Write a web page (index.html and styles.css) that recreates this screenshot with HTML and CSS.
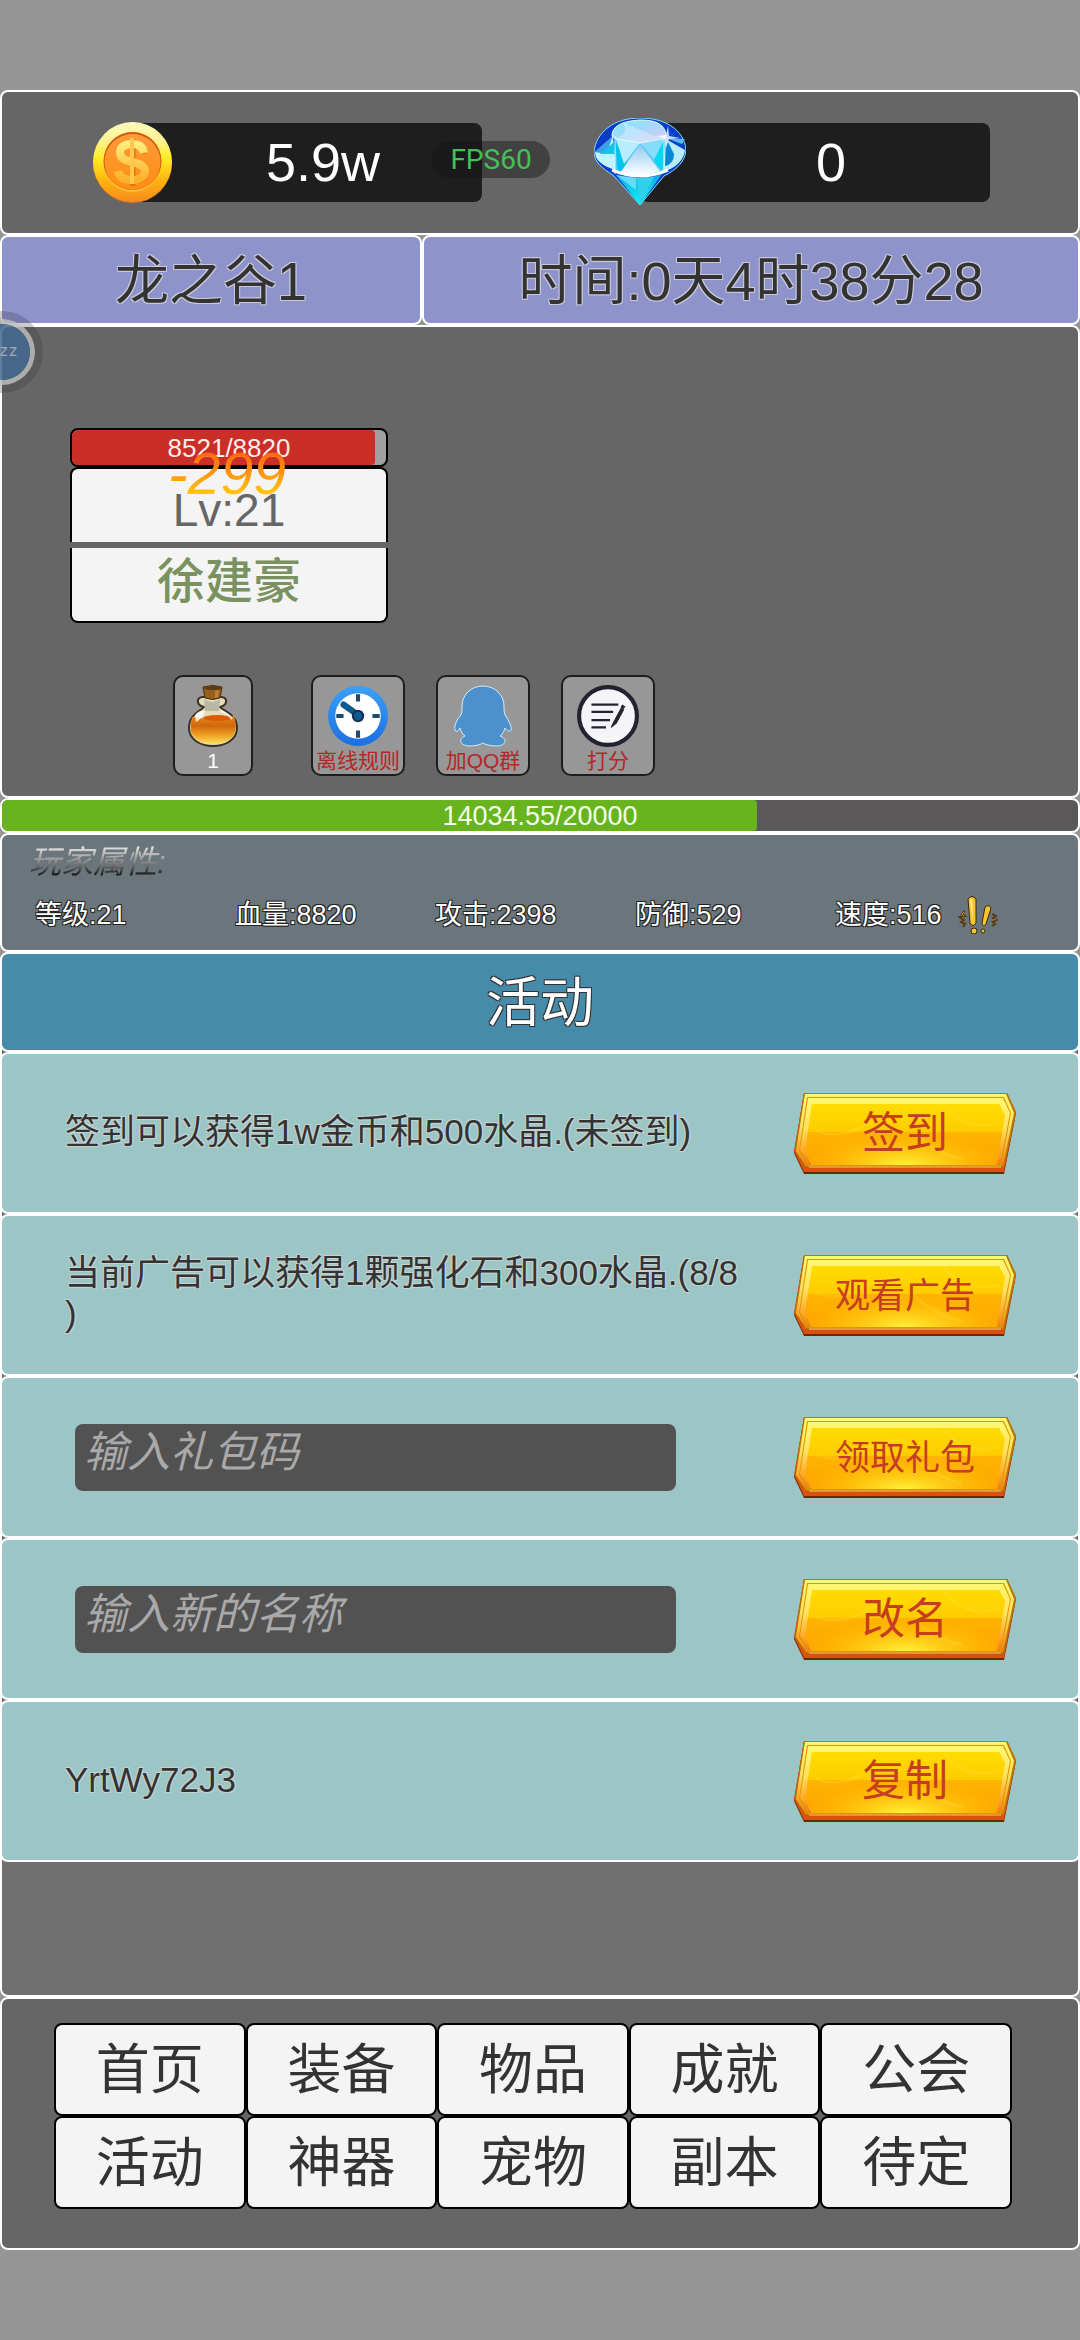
FILE: index.html
```html
<!DOCTYPE html>
<html lang="zh-CN">
<head>
    <meta charset="UTF-8">
    <meta name="viewport" content="width=device-width, initial-scale=1.0">
    <title>活动</title>
    <link rel="stylesheet" href="styles.css">
</head>
<body>
    <!-- shared gold button plate -->
    <svg class="defs" width="0" height="0" aria-hidden="true">
        <defs>
            <linearGradient id="rim" x1="0" y1="0" x2="0" y2="1">
                <stop offset="0" stop-color="#fff873"/>
                <stop offset="0.45" stop-color="#ffe060"/>
                <stop offset="0.8" stop-color="#ffa52a"/>
                <stop offset="1" stop-color="#f07a18"/>
            </linearGradient>
            <linearGradient id="face" x1="0" y1="0" x2="0" y2="1">
                <stop offset="0" stop-color="#ffdc00"/>
                <stop offset="0.45" stop-color="#ffcc00"/>
                <stop offset="0.46" stop-color="#ffb400"/>
                <stop offset="1" stop-color="#ffa400"/>
            </linearGradient>
            <radialGradient id="glow" cx="0.5" cy="1" r="0.5">
                <stop offset="0" stop-color="#fff23a"/>
                <stop offset="1" stop-color="#ffd000" stop-opacity="0"/>
            </radialGradient>
            <symbol id="plate" viewBox="0 0 222 81">
                <path d="M10 0H213L222 20L210 81H10L0 60Z" fill="#6e2800"/>
                <path d="M10 0H213L222 19L210 79H10L0 58Z" fill="#d9500f"/>
                <path d="M10 0H213L222 19L210 74H11L1 58Z" fill="#b87a00"/>
                <path d="M11 1H212L220 20L209 73H12L2 58Z" fill="url(#rim)"/>
                <path d="M13 4H210L217 20L207 73H14L5 58Z" fill="#d99a00"/>
                <path d="M14 5H209L216 20L206 72H15L6 57Z" fill="url(#rim)"/>
                <path d="M18 11H205L211 22L203 72H17L11 57Z" fill="url(#face)"/>
                <path d="M18 11H205L211 22L203 72H17L11 57Z" fill="url(#glow)"/>
                <path d="M22 38Q45 46 68 34Q90 20 112 24M150 12Q172 40 206 30M120 40Q140 60 168 66" fill="none" stroke="#ffe94a" stroke-opacity="0.2" stroke-width="3"/>
                <path d="M15 74H207" stroke="#ffc870" stroke-width="1"/>
            </symbol>
        </defs>
    </svg>

    <main class="game">
        <header class="panel wallet">
            <div class="currency">
                <svg class="coin" viewBox="0 0 79 81" aria-hidden="true">
                    <defs>
                        <linearGradient id="coinRim" x1="0" y1="0" x2="0" y2="1">
                            <stop offset="0" stop-color="#fffbc0"/>
                            <stop offset="0.25" stop-color="#fff08a"/>
                            <stop offset="0.45" stop-color="#ffee20"/>
                            <stop offset="0.75" stop-color="#ffb010"/>
                            <stop offset="1" stop-color="#f88a1c"/>
                        </linearGradient>
                        <linearGradient id="coinFace" x1="0" y1="0" x2="0" y2="1">
                            <stop offset="0" stop-color="#ff9a3c"/>
                            <stop offset="1" stop-color="#ff8f12"/>
                        </linearGradient>
                        <linearGradient id="coinSign" x1="0" y1="0" x2="0" y2="1">
                            <stop offset="0" stop-color="#ffec7a"/>
                            <stop offset="1" stop-color="#ffb02a"/>
                        </linearGradient>
                    </defs>
                    <ellipse cx="39.5" cy="41" rx="39.5" ry="40" fill="#e0761c"/>
                    <ellipse cx="39.5" cy="40" rx="39.5" ry="40" fill="url(#coinRim)"/>
                    <ellipse cx="39.5" cy="40" rx="29" ry="30" fill="#ffbe3a"/>
                    <ellipse cx="39.5" cy="39" rx="29" ry="29" fill="#cf5a10"/>
                    <ellipse cx="39.5" cy="40" rx="28" ry="28" fill="url(#coinFace)"/>
                    <path d="M52 32C51 25 46 22 40 22C32 22 27 26 27 31C27 37 32 39 40 41C48 43 53 45 53 51C53 56 47 60 40 60C32 60 27 56 26 50M40 17V64" fill="none" stroke="#d2600c" stroke-width="5" stroke-opacity="0.6"/>
                    <path d="M51 31C50 25 46 22 39 22C31 22 27 26 27 30C27 36 31 38 39 40C47 42 52 44 52 49C52 55 46 58 39 58C31 58 26 55 25 49" fill="none" stroke="url(#coinSign)" stroke-width="8"/>
                    <path d="M37 16H41V62H37Z" fill="#ffc84a"/>
                </svg>
                <span class="amount">5.9w</span>
            </div>
            <div class="currency">
                <svg class="gem" viewBox="0 0 92 88" aria-hidden="true">
                    <defs>
                        <linearGradient id="gemTop" x1="0" y1="0" x2="1" y2="1">
                            <stop offset="0" stop-color="#7ceaff"/>
                            <stop offset="0.5" stop-color="#a8d8fa"/>
                            <stop offset="1" stop-color="#d9c8f5"/>
                        </linearGradient>
                        <linearGradient id="gemMid" x1="0" y1="0" x2="0" y2="1">
                            <stop offset="0" stop-color="#8cc8f0"/>
                            <stop offset="1" stop-color="#ffffff"/>
                        </linearGradient>
                        <linearGradient id="gemLow" x1="0" y1="0" x2="0" y2="1">
                            <stop offset="0" stop-color="#1aa0e8"/>
                            <stop offset="1" stop-color="#00fff0"/>
                        </linearGradient>
                    </defs>
                    <path d="M0 34C2 14 20 0 46 0C72 0 90 12 92 32C91 44 82 52 70 58L46 87L20 58C8 50 0 44 0 34Z" fill="#0a3cc8" stroke="#7ce0ff" stroke-width="1"/>
                    <path d="M1 34L19 18L22 52C8 48 1 42 1 34Z" fill="#c4f2fc"/>
                    <path d="M1 34L19 18L12 36Z" fill="#3a9ee8"/>
                    <path d="M6 36L20 24L21 36Z" fill="#16c4e4"/>
                    <path d="M70 20L91 32C90 42 82 50 69 54Z" fill="#b8ecfa"/>
                    <path d="M72 20L80 36Q80 46 71 48Z" fill="#0a88d8"/>
                    <path d="M72 18L91 31L82 22L74 8Z" fill="#0b4ad6"/>
                    <path d="M72 20L91 21L88 26Z" fill="#58b8f4"/>
                    <path d="M21 18H72L69 54C54 60 34 60 21 54Z" fill="#4cc8f4"/>
                    <path d="M21 22L36 50L24 54Z" fill="#00c4ec"/>
                    <path d="M21 18L46 25L30 46Z" fill="#b8ecff"/>
                    <path d="M46 25L72 18L62 44Z" fill="#86dcfa"/>
                    <path d="M70 22L60 42L68 52Z" fill="#00d8f4"/>
                    <path d="M46 26L26 55Q46 60 66 53Z" fill="url(#gemMid)"/>
                    <path d="M18 18C18 8 28 3 46 2C60 2 70 5 72 16Q72 22 66 21L46 25L24 21Q18 20 18 18Z" fill="url(#gemTop)" stroke="#e8fbff" stroke-width="1"/>
                    <path d="M28 4Q46 12 66 20L46 25L24 20Q36 14 28 4Z" fill="#fff" fill-opacity="0.3"/>
                    <path d="M22 57Q46 64 68 56L46 87Z" fill="url(#gemLow)"/>
                    <path d="M42 60L46 87L60 59Z" fill="#30d0ea"/>
                    <path d="M22 57L42 60V72Z" fill="#62dcf8"/>
                    <path d="M18 52Q46 64 74 52" fill="none" stroke="#fff" stroke-width="3"/>
                    <path d="M21 18V56M70 20V54" stroke="#d8f8ff" stroke-width="1"/>
                    <path d="M74 8L75 18L86 20L75 21L72 30L71 21L62 18L72 17Z" fill="#fff" fill-opacity="0.8"/>
                </svg>
                <span class="amount">0</span>
            </div>
            <div class="fps">FPS60</div>
        </header>

        <div class="info">
            <div class="panel place">龙之谷1</div>
            <div class="panel clock">时间:0天4时38分28</div>
        </div>

        <section class="panel battle">
            <div class="ball">zz</div>

            <div class="fighter">
                <div class="hp">
                    <div class="hp-fill" style="width: 96.6%"></div>
                    <span class="hp-text">8521/8820</span>
                </div>
                <div class="level">Lv:21</div>
                <div class="name">徐建豪</div>
                <div class="damage">-299</div>
            </div>

            <div class="tools">
                <button class="tool potion" type="button">
                    <svg viewBox="0 0 60 62" aria-hidden="true">
                        <defs>
                            <linearGradient id="juice" x1="0" y1="0" x2="0" y2="1">
                                <stop offset="0" stop-color="#e88a18"/>
                                <stop offset="0.35" stop-color="#d0680c"/>
                                <stop offset="0.7" stop-color="#f0a424"/>
                                <stop offset="1" stop-color="#ffe060"/>
                            </linearGradient>
                        </defs>
                        <path d="M21 22C13 20 13 12 20 12H38C45 12 45 20 37 22C40 26 54 29 54 43C54 55 42 61 30 61S6 55 6 43C6 29 18 26 21 22Z" fill="#e2ddb8" stroke="#3a3020" stroke-width="2"/>
                        <path d="M21 14Q30 20 37 14L36 26H22Z" fill="#b8b8a4"/>
                        <path d="M9 32Q30 36 51 31Q54 40 52 47C48 57 38 59 30 59S12 57 8 47Q7 40 9 32Z" fill="url(#juice)"/>
                        <ellipse cx="34" cy="33" rx="14" ry="3" fill="#dd5a08"/>
                        <path d="M12 30Q16 25 22 26Q20 33 13 37Z" fill="#fff" fill-opacity="0.8"/>
                        <path d="M38 26Q46 29 49 34" fill="none" stroke="#fff" stroke-opacity="0.7" stroke-width="2"/>
                        <path d="M20 2Q30 -1 39 2L37 13Q30 16 22 13Z" fill="#94601c" stroke="#4a2e0a" stroke-width="1"/>
                        <ellipse cx="30" cy="3" rx="9" ry="2" fill="#5e3c10"/>
                        <path d="M32 6L36 5L35 12L32 13Z" fill="#b88434"/>
                    </svg>
                    <span class="count">1</span>
                </button>
                <button class="tool" type="button">
                    <svg viewBox="0 0 60 60" aria-hidden="true">
                        <defs>
                            <linearGradient id="dial" x1="0" y1="0" x2="0" y2="1">
                                <stop offset="0" stop-color="#3aa0f4"/>
                                <stop offset="1" stop-color="#1c6ee4"/>
                            </linearGradient>
                        </defs>
                        <circle cx="30" cy="30" r="29" fill="url(#dial)"/>
                        <circle cx="30" cy="30" r="22" fill="#fff"/>
                        <path d="M30 9V16M30 44V51M9 30H16M44 30H51" stroke="#20496e" stroke-width="4"/>
                        <path d="M16 19L30 29" stroke="#0c5a90" stroke-width="6" stroke-linecap="round"/>
                        <circle cx="30" cy="30" r="6" fill="#14304e"/>
                        <circle cx="30" cy="30" r="4" fill="#0c5a90"/>
                    </svg>
                    <span>离线规则</span>
                </button>
                <button class="tool" type="button">
                    <svg viewBox="0 0 60 62" aria-hidden="true">
                        <path d="M30 1C42 1 51 10 51 21C51 25 51 27 52 30C56 36 59 42 58 45C57 48 54 45 52 43C51 46 50 49 47 51C55 54 53 60 45 61C38 61 33 60 30 58C27 60 22 61 15 61C7 60 5 54 12 51C9 49 8 46 7 43C5 46 3 48 2 45C1 42 3 35 8 30C9 27 9 25 9 21C9 10 18 1 30 1Z" fill="#4c90ce" stroke="#d2efff" stroke-width="1"/>
                    </svg>
                    <span>加QQ群</span>
                </button>
                <button class="tool" type="button">
                    <svg viewBox="0 0 60 60" aria-hidden="true">
                        <circle cx="30" cy="30" r="28" fill="#f5f5f9" stroke="#232330" stroke-width="4"/>
                        <path d="M14 19H40M14 26H35M14 34H32M14 41H28" stroke="#232330" stroke-width="2"/>
                        <path d="M43 22L36 35L33 41L38 37L45 24Z" fill="#232330" stroke="#232330" stroke-width="1"/>
                        <path d="M43 20L46 22" stroke="#232330" stroke-width="3"/>
                    </svg>
                    <span>打分</span>
                </button>
            </div>
        </section>

        <div class="panel exp">
            <div class="exp-fill" style="width: 70.2%"></div>
            <span class="exp-text">14034.55/20000</span>
        </div>

        <section class="panel stats">
            <div class="stats-title">玩家属性:</div>
            <div class="stats-list">
                <span>等级:21</span>
                <span>血量:8820</span>
                <span>攻击:2398</span>
                <span>防御:529</span>
                <span>速度:516
                    <svg class="alert" viewBox="0 0 40 38" aria-hidden="true">
                        <path d="M10 3Q14 -2 18 3L18 27Q15 32 12 27Z" fill="#f8c430" stroke="#3a2606" stroke-width="1"/>
                        <path d="M12 4L14 3L15 24Z" fill="#fff0a0"/>
                        <path d="M27 11Q31 8 33 12L28 28Q25 32 24 27Z" fill="#f8c430" stroke="#3a2606" stroke-width="1"/>
                        <circle cx="16" cy="35" r="3" fill="#f8c430" stroke="#3a2606" stroke-width="1"/>
                        <circle cx="25" cy="35" r="2" fill="#f8c430" stroke="#3a2606" stroke-width="1"/>
                        <path d="M7 15L4 18L7 20L1 21L6 24L3 26L7 28L5 31M34 18L38 20L35 22L39 24L35 26L37 28L34 30" fill="none" stroke="#5a3a10" stroke-width="2"/>
                        <path d="M6 16L4 18L6 20M36 23L38 24" fill="none" stroke="#e08a20" stroke-width="1"/>
                    </svg>
                </span>
            </div>
        </section>

        <section class="panel activity">
            <h1 class="panel heading">活动</h1>
            <div class="panel item">
                <p class="desc">签到可以获得1w金币和500水晶.(未签到)</p>
                <button class="gold" type="button"><svg aria-hidden="true"><use href="#plate"/></svg><span>签到</span></button>
            </div>
            <div class="panel item">
                <p class="desc">当前广告可以获得1颗强化石和300水晶.(8/8)</p>
                <button class="gold small" type="button"><svg aria-hidden="true"><use href="#plate"/></svg><span>观看广告</span></button>
            </div>
            <div class="panel item">
                <input class="field" type="text" placeholder="输入礼包码" aria-label="输入礼包码">
                <button class="gold small" type="button"><svg aria-hidden="true"><use href="#plate"/></svg><span>领取礼包</span></button>
            </div>
            <div class="panel item">
                <input class="field" type="text" placeholder="输入新的名称" aria-label="输入新的名称">
                <button class="gold" type="button"><svg aria-hidden="true"><use href="#plate"/></svg><span>改名</span></button>
            </div>
            <div class="panel item">
                <p class="desc">YrtWy72J3</p>
                <button class="gold" type="button"><svg aria-hidden="true"><use href="#plate"/></svg><span>复制</span></button>
            </div>
        </section>

        <nav class="panel menu">
            <button type="button">首页</button>
            <button type="button">装备</button>
            <button type="button">物品</button>
            <button type="button">成就</button>
            <button type="button">公会</button>
            <button type="button">活动</button>
            <button type="button">神器</button>
            <button type="button">宠物</button>
            <button type="button">副本</button>
            <button type="button">待定</button>
        </nav>
    </main>
</body>
</html>
```

FILE: styles.css
```css
* {
    box-sizing: border-box;
}
body {
    margin: 0;
    background-color: #959595;
    font-family: "Liberation Sans", "Noto Sans CJK SC", sans-serif;
    color: #333;
}
button, input {
    font-family: inherit;
    margin: 0;
    padding: 0;
}
button {
    cursor: pointer;
}
.defs {
    position: absolute;
}
.game {
    display: flex;
    flex-direction: column;
    min-height: 100vh;
    padding: 90px 0;
}
.panel {
    border: 2px solid #fff;
    border-radius: 8px;
    background-color: #666;
}

/* wallet */
.wallet {
    position: relative;
    display: flex;
    justify-content: center;
    gap: 112px;
    padding: 26px 0 27px 3px;
}
.currency {
    display: flex;
    align-items: center;
}
.coin, .gem {
    position: relative;
    flex: none;
}
.coin {
    width: 79px;
    height: 81px;
}
.gem {
    width: 92px;
    height: 88px;
}
.amount {
    width: 350px;
    margin-left: -40px;
    padding-left: 32px;
    border-radius: 8px;
    background-color: #1e1e1e;
    color: #fff;
    font-size: 54px;
    line-height: 79px;
    text-align: center;
}
.gem + .amount {
    margin-left: -46px;
}
.fps {
    position: absolute;
    top: 49px;
    left: 40%;
    padding: 1px 18px 0;
    border-radius: 19px;
    background-color: rgba(20, 20, 22, 0.45);
    color: #45c055;
    font-family: Roboto, sans-serif;
    font-size: 28px;
    line-height: 36px;
}

/* place and time */
.info {
    display: flex;
}
.info .panel {
    padding-top: 2px;
    background-color: #8f93cb;
    font-size: 54px;
    line-height: 84px;
    text-align: center;
    text-shadow: 1px 1px 0 #c9c9d8, -1px 1px 0 #c9c9d8, 1px -1px 0 #c9c9d8, -1px -1px 0 #c9c9d8;
}
.place {
    flex: 39;
}
.clock {
    flex: 61;
}

/* battle */
.battle {
    position: relative;
    padding: 101px 68px 20px;
}
.ball {
    position: absolute;
    top: -16px;
    left: -41px;
    width: 82px;
    height: 82px;
    padding-right: 17px;
    border: 8px solid rgba(50, 50, 60, 0.25);
    border-radius: 50%;
    background: radial-gradient(circle closest-side, rgba(66, 104, 144, 0.85) 84%, rgba(185, 185, 185, 0.85) 86%) padding-box;
    color: #a3a9b2;
    font-family: "DejaVu Sans Mono", monospace;
    font-size: 16px;
    line-height: 64px;
    text-align: right;
}
.fighter {
    position: relative;
    width: 318px;
    text-align: center;
}
.hp {
    position: relative;
    height: 39px;
    border: 2px solid #000;
    border-radius: 8px;
    background-color: #a0a0a0;
    overflow: hidden;
}
.hp-fill {
    height: 100%;
    border-radius: 4px;
    background-color: #c92e27;
}
.hp-text {
    position: absolute;
    inset: 0;
    color: #ffeceb;
    font-size: 26px;
    line-height: 37px;
}
.level, .name {
    height: 75px;
    border: 2px solid #000;
    background-color: #f4f4f4;
}
.level {
    padding-top: 10px;
    border-bottom: none;
    border-radius: 8px 8px 0 0;
    color: #666;
    font-size: 46px;
    line-height: 62px;
}
.name {
    margin-top: 6px;
    border-top: none;
    border-radius: 0 0 8px 8px;
    color: #7a9160;
    font-size: 48px;
    font-weight: 500;
    line-height: 68px;
}
.damage {
    position: absolute;
    top: 14px;
    left: 0;
    width: 100%;
    padding-right: 4px;
    background: linear-gradient(#ff6a10 20%, #ffcc10 85%);
    -webkit-background-clip: text;
    background-clip: text;
    color: transparent;
    font-size: 59px;
    font-style: italic;
    line-height: 64px;
}
.tools {
    display: flex;
    gap: 31px;
    margin-top: 52px;
    padding-left: 103px;
}
.tool {
    display: flex;
    flex-direction: column;
    align-items: center;
    width: 94px;
    height: 101px;
    padding-top: 8px;
    border: 2px solid #1d1d1d;
    border-radius: 10px;
    background-color: #979797;
    color: #b52626;
    font-size: 21px;
    line-height: 28px;
    white-space: nowrap;
}
.tool svg {
    flex: none;
    height: 62px;
}
.potion {
    width: 80px;
    margin-right: 27px;
}
.count {
    color: #fff;
}

/* experience bar */
.exp {
    position: relative;
    height: 35px;
    background-color: #5b5859;
    overflow: hidden;
}
.exp-fill {
    height: 100%;
    border-radius: 4px;
    background-color: #68b41e;
}
.exp-text {
    position: absolute;
    inset: 0;
    color: #f4ffe8;
    font-size: 27px;
    line-height: 33px;
    text-align: center;
}

/* player stats */
.stats {
    padding: 7px 43px 15px 33px;
    background-color: #6b767c;
}
.stats-title {
    width: max-content;
    margin-left: -6px;
    padding-right: 8px;
    background: linear-gradient(#ddd 15%, #888 50%, #111 85%);
    -webkit-background-clip: text;
    background-clip: text;
    color: transparent;
    font-size: 32px;
    font-style: italic;
    line-height: 40px;
}
.stats-list {
    display: grid;
    grid-template-columns: repeat(5, 1fr);
    padding-top: 13px;
    color: #fff;
    font-size: 27px;
    line-height: 40px;
    text-shadow: 1px 1px 0 #222, -1px 1px 0 #222, 1px -1px 0 #222, -1px -1px 0 #222;
    white-space: nowrap;
}
.stats-list span {
    display: flex;
    align-items: center;
}
.alert {
    width: 40px;
    height: 38px;
    margin-left: 16px;
}

/* activity list */
.activity {
    flex: 1;
    background-color: #707070;
}
.activity .panel {
    margin: 0 -2px;
}
.activity .heading {
    margin-top: -2px;
    padding-top: 2px;
    background-color: #478bab;
    color: #fff;
    font-size: 54px;
    font-weight: normal;
    line-height: 94px;
    text-align: center;
    text-shadow: 1px 1px 0 #333, -1px 1px 0 #333, 1px -1px 0 #333, -1px -1px 0 #333;
}
.item {
    display: flex;
    align-items: center;
    justify-content: space-between;
    min-height: 162px;
    padding: 0 62px 0 63px;
    background-color: #9bc6c5;
}
.desc {
    max-width: 680px;
    margin: 0;
    padding-bottom: 4px;
    font-size: 35px;
    line-height: 41px;
    line-break: anywhere;
    text-shadow: 1px 1px 0 #c5d2d0, -1px 1px 0 #c5d2d0, 1px -1px 0 #c5d2d0, -1px -1px 0 #c5d2d0;
}
.field {
    width: 601px;
    height: 67px;
    margin-left: 10px;
    padding: 0 9px 10px;
    border: none;
    border-radius: 8px;
    background-color: #525252;
    color: #fff;
    font-size: 43px;
}
.field::placeholder {
    color: #a9a9a9;
    font-style: italic;
    opacity: 1;
}
.gold {
    position: relative;
    width: 222px;
    height: 81px;
    border: none;
    background: none;
    color: #c63d22;
    font-size: 43px;
    line-height: 81px;
}
.gold svg {
    position: absolute;
    inset: 0;
    width: 100%;
    height: 100%;
}
.gold span {
    position: relative;
}
.small {
    font-size: 35px;
}

/* bottom menu */
.menu {
    display: grid;
    grid-template-columns: repeat(5, 1fr);
    padding: 24px 66px 39px 52px;
}
.menu button {
    height: 93px;
    border: 2px solid #000;
    border-radius: 8px;
    background-color: #f4f4f4;
    color: #333;
    font-size: 54px;
    line-height: 86px;
}
```
